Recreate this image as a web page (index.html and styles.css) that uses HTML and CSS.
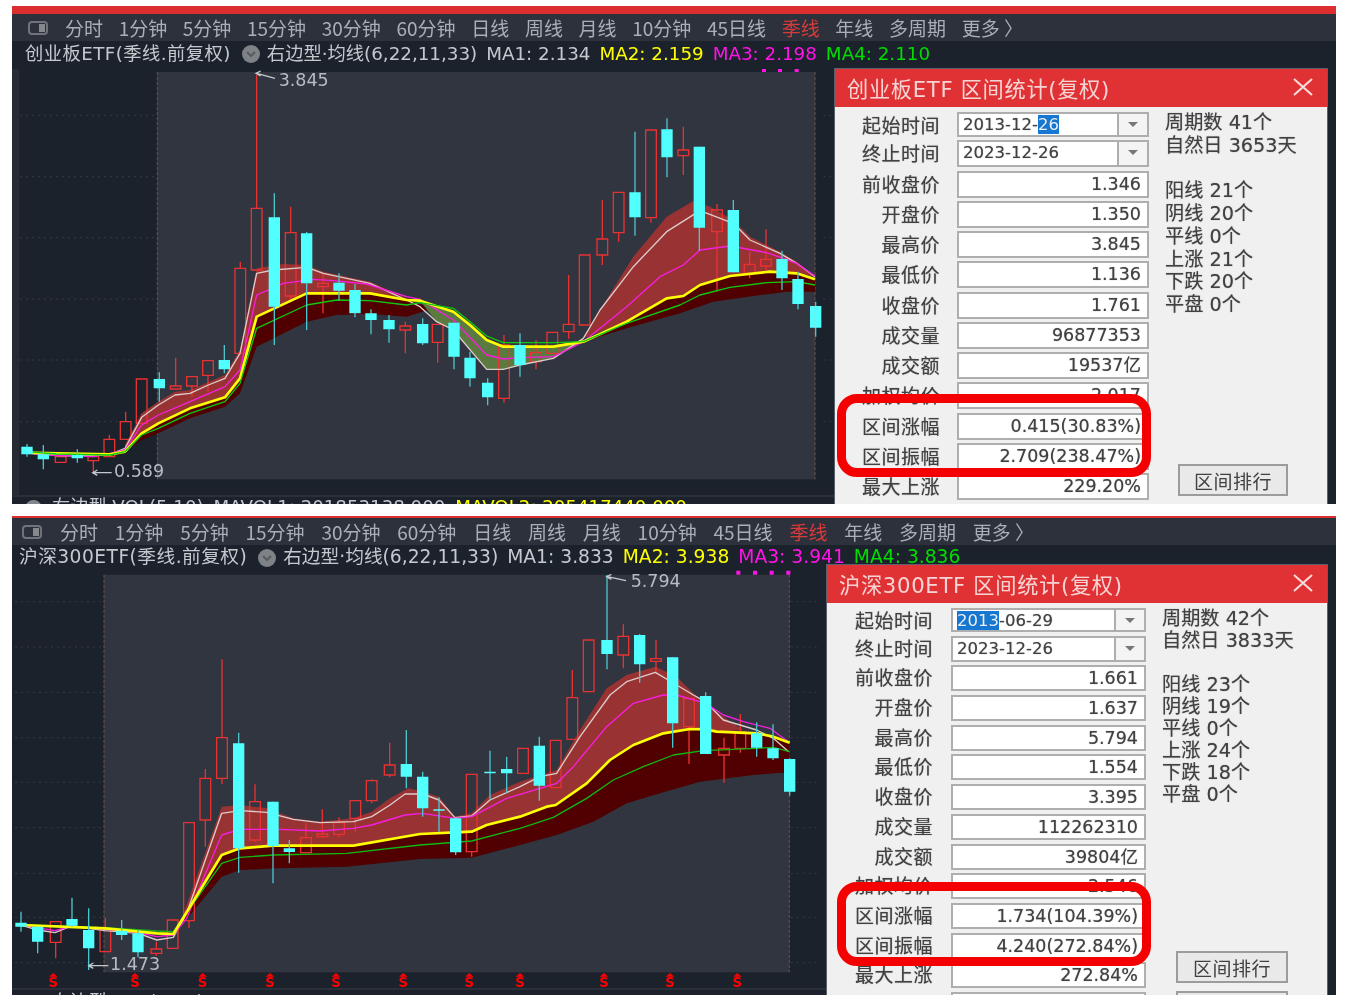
FILE: index.html

```html
<!DOCTYPE html>
<html lang="zh-CN">
<head>
  <meta charset="UTF-8">
  <title>区间统计</title>
  <link rel="stylesheet" href="styles.css">
</head>
<body>

  <section class="shot shot-top">
    <div class="top-line"></div>
    <div class="toolbar">
      <svg class="layout-icon" viewBox="0 0 20 14"><rect x="1" y="1" width="18" height="12" rx="3"/><rect class="layout-icon-bar" x="11" y="3" width="6" height="8"/></svg>
      <span>分时</span><span>1分钟</span><span>5分钟</span><span>15分钟</span><span>30分钟</span><span>60分钟</span><span>日线</span><span>周线</span><span>月线</span><span>10分钟</span><span>45日线</span><span class="active">季线</span><span>年线</span><span>多周期</span><span>更多 〉</span>
    </div>
    <div class="legend">
      <span class="legend-name">创业板ETF(季线.前复权)</span>
      <svg class="legend-icon" viewBox="0 0 18 18"><circle cx="9" cy="9" r="9"/><path d="M5 7l4 4 4-4"/></svg>
      <span>右边型·均线(6,22,11,33)</span>
      <span>MA1: 2.134</span><span class="ma2">MA2: 2.159</span><span class="ma3">MA3: 2.198</span><span class="ma4">MA4: 2.110</span>
    </div>
    <div class="main">
      <div class="chart">
        <svg class="kline" viewBox="36 27 2469 1278">
          <rect class="side-strip" x="36" y="27" width="22" height="1278"/>
          <path class="grid" d="M60 166H465M60 350H465M60 533H465M60 717H465M60 900H465M60 1085H465M2470 166H2505M2470 350H2505M2470 533H2505M2470 717H2505M2470 900H2505M2470 1085H2505"/>
          <rect class="plot" x="472" y="36" width="1973" height="1222"/>
          <path class="plot-edge" d="M472 36V1258M2445 36V1258"/>
          <path class="dots" d="M2286 24h12v12h-12zM2334 24h12v12h-12zM2384 24h12v12h-12z"/>

          <polygon class="fill-maroon" points="375,1175 425,1120 475,1090 570,1045 675,1012 720,955 770,770 920,700 1110,700 1220,720 1300,745 1220,770 1110,762 1010,765 920,785 770,860 720,1000 675,1040 570,1075 475,1120 425,1140"/>
          <polygon class="fill-maroon" points="1750,845 1880,785 2000,715 2050,708 2100,675 2190,648 2310,635 2390,640 2445,658 2445,695 2360,695 2260,708 2140,725 2040,760 1880,805"/>
          <polygon class="fill-brown" points="375,1155 425,1060 475,1025 525,995 570,990 675,945 720,870 770,625 850,612 920,615 970,635 1110,665 1220,715 1260,722 1220,720 1110,700 920,700 770,770 720,955 675,1012 570,1045 475,1090 425,1120 375,1175"/>
          <polygon class="fill-brown" points="1750,835 1800,750 1900,590 2000,470 2080,423 2130,440 2200,480 2250,530 2340,575 2390,605 2445,650 2390,640 2310,635 2190,648 2100,675 2050,708 2000,715 1880,785"/>
          <polygon class="fill-olive" points="1260,722 1360,755 1410,795 1460,840 1510,860 1660,860 1750,845 1660,895 1560,915 1510,928 1460,928 1360,810 1310,785"/>

          <path class="wick-red" d="M280 1202V1237M328 1125V1138M377 1055V1085M527 893V978M576 978V1010M624 946V995M721 605V625M770 45V445M872 440V518M872 708V720M969 640V670M969 680V760M1216 785V798M1216 810V880M1313 847V908M1512 825V855M1512 1015V1028M1608 840V878M1608 905V928M1706 645V793M1706 815V836M1807 420V537M1807 585V615M1856 518V545M1953 473V488M2050 200V270M2050 287V345M2151 432V450M2151 515V695M2249 575V613M2249 640V655M2298 508V598M2298 618V630"/>
          <path class="body-red" d="M166 1190h32v17h-32zM264 1190h32v12h-32zM312 1138h32v52h-32zM361 1085h32v53h-32zM409 957h32v133h-32zM511 978h32v9h-32zM560 950h32v28h-32zM608 902h32v44h-32zM705 625h32v255h-32zM754 445h32v185h-32zM856 518h32v190h-32zM953 670h32v10h-32zM1200 798h32v12h-32zM1297 793h32v54h-32zM1496 855h32v160h-32zM1592 878h32v27h-32zM1641 817h32v63h-32zM1690 793h32v22h-32zM1738 585h32v210h-32zM1791 537h32v48h-32zM1840 397h32v121h-32zM1937 210h32v263h-32zM2034 270h32v17h-32zM2135 450h32v65h-32zM2233 613h32v27h-32zM2282 598h32v20h-32z"/>

          <polyline class="ma-white" points="80,1178 130,1185 230,1188 330,1183 375,1165 425,1072 475,1035 525,1005 570,1000 625,975 675,955 720,880 770,640 820,630 920,622 970,640 1110,670 1220,720 1260,740 1310,785 1360,810 1460,928 1510,928 1560,915 1660,895 1750,835 1800,750 1900,620 2000,515 2100,452 2200,490 2250,540 2340,580 2390,610 2445,650"/>
          <polyline class="ma-magenta" points="80,1178 130,1185 280,1190 330,1180 375,1170 425,1095 475,1065 570,1025 675,980 720,930 770,705 850,670 940,658 1000,662 1100,672 1220,710 1260,718 1360,780 1460,885 1510,897 1560,893 1660,890 1750,845 1880,740 1980,650 2050,615 2100,570 2190,558 2300,578 2350,595 2390,610 2445,648"/>
          <polyline class="ma-yellow" points="80,1178 170,1180 330,1183 375,1175 425,1120 475,1090 570,1045 675,1012 720,955 770,770 920,700 1110,700 1220,720 1260,722 1360,755 1410,795 1460,840 1510,860 1660,860 1750,845 1880,785 2000,715 2050,708 2100,675 2190,648 2310,635 2390,640 2445,658"/>
          <polyline class="ma-green" points="80,1175 170,1182 330,1185 375,1175 425,1125 475,1105 570,1060 675,1025 720,970 770,805 920,735 1010,720 1110,722 1220,735 1260,728 1360,745 1410,785 1460,828 1510,848 1660,848 1750,845 1880,790 2040,735 2100,705 2190,682 2300,668 2390,665 2445,675"/>

          <path class="wick-cyan" d="M81 1152V1190M130 1155V1228M232 1168V1208M478 937V1025M673 855V940M823 400V855M920 516V810M1017 640V720M1065 672V772M1113 748V823M1167 765V848M1268 775V855M1362 788V928M1410 875V980M1463 955V1036M1560 820V950M1905 215V527M2001 175V352M2098 260V572M2200 420V637M2346 572V690M2394 635V748M2447 725V830"/>
          <path class="body-cyan" d="M64 1160h34v23h-34zM113 1183h34v15h-34zM215 1185h34v10h-34zM461 957h34v28h-34zM656 900h34v28h-34zM806 472h34v268h-34zM903 520h34v150h-34zM1000 668h34v24h-34zM1048 690h34v70h-34zM1096 760h34v20h-34zM1150 780h34v28h-34zM1251 792h34v58h-34zM1345 788h34v102h-34zM1393 893h34v62h-34zM1446 968h34v44h-34zM1543 855h34v60h-34zM1888 397h34v75h-34zM1984 208h34v84h-34zM2081 260h34v243h-34zM2183 450h34v187h-34zM2329 597h34v58h-34zM2377 657h34v75h-34zM2430 738h34v65h-34z"/>
          <path class="seam" d="M2445 738V803"/>

          <path class="pointer" d="M825 55L770 40M782 33L768 40L782 48M335 1238H280M292 1230L278 1238L292 1246"/>
          <text class="price" x="836" y="78">3.845</text>
          <text class="price" x="342" y="1252">0.589</text>
        </svg>
        <div class="vol-line">
          <span class="vol-dot"></span><span>右边型 VOL(5,10)</span><span>MAVOL1: 201853138.000</span><span class="ma2">MAVOL2: 205417440.000</span>
        </div>
      </div>

      <div class="dialog">
        <div class="dialog-title">
          <span>创业板ETF 区间统计(复权)</span>
          <svg class="close" viewBox="0 0 20 18"><path d="M1 1L19 17M19 1L1 17"/></svg>
        </div>
        <div class="dialog-body">
          <div class="form">
            <div class="row"><span class="label">起始时间</span><div class="field field-date"><span class="date-text">2013-12-<mark>26</mark></span><span class="drop"></span></div></div>
            <div class="row"><span class="label">终止时间</span><div class="field field-date"><span class="date-text">2023-12-26</span><span class="drop"></span></div></div>
            <div class="row"><span class="label">前收盘价</span><div class="field">1.346</div></div>
            <div class="row"><span class="label">开盘价</span><div class="field">1.350</div></div>
            <div class="row"><span class="label">最高价</span><div class="field">3.845</div></div>
            <div class="row"><span class="label">最低价</span><div class="field">1.136</div></div>
            <div class="row"><span class="label">收盘价</span><div class="field">1.761</div></div>
            <div class="row"><span class="label">成交量</span><div class="field">96877353</div></div>
            <div class="row"><span class="label">成交额</span><div class="field">19537亿</div></div>
            <div class="row"><span class="label">加权均价</span><div class="field">2.017</div></div>
            <div class="row"><span class="label">区间涨幅</span><div class="field">0.415(30.83%)</div></div>
            <div class="row"><span class="label">区间振幅</span><div class="field">2.709(238.47%)</div></div>
            <div class="row"><span class="label">最大上涨</span><div class="field">229.20%</div></div>
          </div>
          <div class="side">
            <div>周期数 41个</div>
            <div>自然日 3653天</div>
            <div class="side-group">阳线 21个</div>
            <div>阴线 20个</div>
            <div>平线 0个</div>
            <div>上涨 21个</div>
            <div>下跌 20个</div>
            <div>平盘 0个</div>
            <button class="rank-btn">区间排行</button>
          </div>
        </div>
        <div class="mark-box"></div>
      </div>
    </div>
  </section>

  <section class="shot shot-bottom">
    <div class="top-line"></div>
    <div class="toolbar">
      <svg class="layout-icon" viewBox="0 0 20 14"><rect x="1" y="1" width="18" height="12" rx="3"/><rect class="layout-icon-bar" x="11" y="3" width="6" height="8"/></svg>
      <span>分时</span><span>1分钟</span><span>5分钟</span><span>15分钟</span><span>30分钟</span><span>60分钟</span><span>日线</span><span>周线</span><span>月线</span><span>10分钟</span><span>45日线</span><span class="active">季线</span><span>年线</span><span>多周期</span><span>更多 〉</span>
    </div>
    <div class="legend">
      <span class="legend-name">沪深300ETF(季线.前复权)</span>
      <svg class="legend-icon" viewBox="0 0 18 18"><circle cx="9" cy="9" r="9"/><path d="M5 7l4 4 4-4"/></svg>
      <span>右边型·均线(6,22,11,33)</span>
      <span>MA1: 3.833</span><span class="ma2">MA2: 3.938</span><span class="ma3">MA3: 3.941</span><span class="ma4">MA4: 3.836</span>
    </div>
    <div class="main">
      <div class="chart">
        <svg class="kline" viewBox="36 15 2445 1269">
          <path class="grid" d="M45 125H305M45 261H305M45 397H305M45 533H305M45 667H305M45 803H305M45 940H305M45 1072H305M45 1208H305M2372 125H2460M2372 261H2460M2372 397H2460M2372 533H2460M2372 667H2460M2372 803H2460M2372 940H2460M2372 1072H2460M2372 1208H2460"/>
          <rect class="plot" x="312" y="44" width="2056" height="1193"/>
          <path class="plot-edge" d="M312 44V1237M2368 44V1237"/>
          <path class="dots" d="M2209 32h12v12h-12zM2259 32h12v12h-12zM2309 32h12v12h-12zM2359 32h12v12h-12z"/>

          <polygon class="fill-maroon" points="520,1122 665,885 720,865 820,857 1060,857 1260,822 1415,815 1460,795 1560,770 1640,740 1667,735 1760,670 1830,600 1900,555 1990,520 2070,507 2117,508 2150,515 2270,520 2320,530 2369,548 2369,640 2340,638 2260,645 2100,665 1980,700 1880,730 1780,785 1670,825 1560,855 1415,893 1260,897 1040,920 830,925 720,930 665,950 520,1125"/>
          <polygon class="fill-brown" points="540,1090 665,740 720,735 800,745 880,775 960,785 1060,775 1115,755 1170,715 1225,685 1268,695 1317,710 1365,770 1415,760 1470,705 1560,665 1670,630 1740,510 1820,385 1880,345 1966,320 2030,350 2080,400 2170,470 2230,510 2150,515 2117,508 2070,507 1990,520 1900,555 1830,600 1760,670 1667,735 1640,740 1560,770 1460,795 1415,815 1260,822 1060,857 820,857 720,865 665,885"/>

          <path class="wick-red" d="M167 1147V1195M316 1073V1105M469 1145V1167M469 1180V1187M567 1082V1105M616 627V655M616 780V860M666 298V533M666 655V672M765 673V725M765 840V845M918 790V833M967 748V822M967 830V835M1017 772V788M1017 823V832M1066 775V815M1115 658V662M1115 722V730M1169 548V615M1169 645V652M1415 875V890M1717 330V413M1870 193V229M1870 285V325M1968 240V296M1968 304V335M2067 500V612M2172 533V565M2172 585V668M2221 462V515M2221 565V578"/>
          <path class="body-red" d="M151 1085h32v62h-32zM300 1105h32v70h-32zM453 1167h32v13h-32zM502 1080h32v85h-32zM551 788h32v294h-32zM600 655h32v125h-32zM650 533h32v122h-32zM749 725h32v115h-32zM902 833h32v45h-32zM951 822h32v8h-32zM1001 788h32v35h-32zM1050 722h32v53h-32zM1099 662h32v60h-32zM1153 615h32v30h-32zM1399 643h32v232h-32zM1553 565h32v75h-32zM1651 541h32v142h-32zM1701 413h32v125h-32zM1750 240h32v155h-32zM1854 229h32v56h-32zM1952 296h32v8h-32zM2051 415h32v85h-32zM2156 565h32v20h-32zM2205 515h32v50h-32z"/>

          <polyline class="ma-white" points="63,1095 113,1110 165,1118 215,1098 315,1112 415,1120 470,1140 520,1132 560,1060 665,760 720,752 800,757 880,778 960,788 1060,785 1115,770 1170,735 1215,702 1268,702 1317,720 1365,773 1415,768 1470,720 1560,680 1620,650 1670,640 1740,530 1830,405 1880,365 1966,337 2030,375 2080,405 2117,425 2170,480 2270,510 2320,535 2366,575"/>
          <polyline class="ma-magenta" points="63,1095 165,1112 215,1098 315,1108 415,1118 470,1130 520,1125 560,1075 665,825 720,808 840,808 960,813 1060,805 1115,795 1215,765 1268,760 1365,775 1415,770 1520,715 1670,670 1720,620 1820,500 1900,430 1990,405 2030,405 2117,430 2170,465 2230,485 2310,505 2369,548"/>
          <polyline class="ma-green" points="63,1095 315,1103 470,1113 520,1115 665,910 720,892 820,885 1040,880 1260,855 1415,843 1560,805 1660,772 1760,715 1840,660 1930,620 2020,585 2110,572 2270,565 2320,562 2369,575"/>
          <polyline class="ma-yellow" points="63,1095 315,1105 470,1120 520,1122 665,885 720,865 820,857 1060,857 1260,822 1415,815 1460,795 1560,770 1640,740 1667,735 1760,670 1830,600 1900,555 1990,520 2070,507 2117,508 2150,515 2270,520 2320,530 2369,548"/>

          <path class="wick-cyan" d="M63 1055V1115M113 1100V1180M216 1013V1100M266 1045V1230M365 1080V1140M414 1110V1192M716 518V938M819 725V970M868 840V910M1219 510V685M1268 635V770M1317 712V815M1367 775V885M1470 572V720M1520 590V700M1618 530V722M1821 45V328M1919 222V368M2018 292V563M2117 397V582M2270 487V590M2319 493V600M2369 595V707"/>
          <path class="body-cyan" d="M46 1088h34v12h-34zM96 1100h34v45h-34zM199 1077h34v20h-34zM249 1110h34v55h-34zM348 1112h34v13h-34zM397 1120h34v57h-34zM699 550h34v315h-34zM802 725h34v133h-34zM851 865h34v11h-34zM1202 612h34v38h-34zM1251 650h34v95h-34zM1300 748h34v4h-34zM1350 775h34v102h-34zM1453 635h34v5h-34zM1503 627h34v13h-34zM1601 557h34v120h-34zM1804 240h34v42h-34zM1902 225h34v88h-34zM2001 292h34v198h-34zM2100 408h34v174h-34zM2253 520h34v43h-34zM2302 565h34v30h-34zM2352 597h34v98h-34z"/>
          <path class="seam" d="M2368 597V695"/>

          <path class="pointer" d="M1878 62L1822 50M1834 43L1820 50L1834 58M325 1217H268M280 1209L266 1217L280 1225"/>
          <text class="price" x="1892" y="82">5.794</text>
          <text class="price" x="330" y="1231">1.473</text>

          <path class="s-arrow" d="M160 1239l13 11h-26zM405 1239l13 11h-26zM608 1239l13 11h-26zM810 1239l13 11h-26zM1008 1239l13 11h-26zM1210 1239l13 11h-26zM1408 1239l13 11h-26zM1560 1239l13 11h-26zM1812 1239l13 11h-26zM2010 1239l13 11h-26zM2212 1239l13 11h-26z"/>
          <text class="s-mark" x="160 405 608 810 1008 1210 1408 1560 1812 2010 2212" y="1282">SSSSSSSSSSS</text>
        </svg>
        <div class="vol-line">
          <span class="vol-dot"></span><span>右边型 VOL(5,10)</span><span>MAVOL1: 112382492.000</span><span class="ma2">MAVOL2: 108884370.000</span>
        </div>
      </div>

      <div class="dialog">
        <div class="dialog-title">
          <span>沪深300ETF 区间统计(复权)</span>
          <svg class="close" viewBox="0 0 20 18"><path d="M1 1L19 17M19 1L1 17"/></svg>
        </div>
        <div class="dialog-body">
          <div class="form">
            <div class="row"><span class="label">起始时间</span><div class="field field-date"><span class="date-text"><mark>2013</mark>-06-29</span><span class="drop"></span></div></div>
            <div class="row"><span class="label">终止时间</span><div class="field field-date"><span class="date-text">2023-12-26</span><span class="drop"></span></div></div>
            <div class="row"><span class="label">前收盘价</span><div class="field">1.661</div></div>
            <div class="row"><span class="label">开盘价</span><div class="field">1.637</div></div>
            <div class="row"><span class="label">最高价</span><div class="field">5.794</div></div>
            <div class="row"><span class="label">最低价</span><div class="field">1.554</div></div>
            <div class="row"><span class="label">收盘价</span><div class="field">3.395</div></div>
            <div class="row"><span class="label">成交量</span><div class="field">112262310</div></div>
            <div class="row"><span class="label">成交额</span><div class="field">39804亿</div></div>
            <div class="row"><span class="label">加权均价</span><div class="field">2.546</div></div>
            <div class="row"><span class="label">区间涨幅</span><div class="field">1.734(104.39%)</div></div>
            <div class="row"><span class="label">区间振幅</span><div class="field">4.240(272.84%)</div></div>
            <div class="row"><span class="label">最大上涨</span><div class="field">272.84%</div></div>
            <div class="row"><span class="label"></span><div class="field"></div></div>
          </div>
          <div class="side">
            <div>周期数 42个</div>
            <div>自然日 3833天</div>
            <div class="side-group">阳线 23个</div>
            <div>阴线 19个</div>
            <div>平线 0个</div>
            <div>上涨 24个</div>
            <div>下跌 18个</div>
            <div>平盘 0个</div>
            <button class="rank-btn">区间排行</button>
            <button class="rank-btn rank-btn-next"></button>
          </div>
        </div>
        <div class="mark-box"></div>
      </div>
    </div>
  </section>

</body>
</html>
```

FILE: styles.css

```css
body {
  margin: 0;
  padding: 6px 11px 0 12px;
  background: #fff;
  font-family: "DejaVu Sans", "Noto Sans CJK SC", sans-serif;
}

.shot {
  overflow: hidden;
  background: #1c222c;
  color: #c4c9ce;
  filter: blur(0.55px);
}
.shot-top {
  height: 498px;
  margin-bottom: 12px;
  --toolbar-pad: 16px;
  --toolbar-gap: 15.65px;
  --icon-gap: 17px;
  --legend-pad: 13px;
  --legend-h: 28px;
  --legend-line: 26px;
  --legend-font: 18.3px;
  --vol-pad: 1px;
  --label-w: 105px;
  --label-gap: 17px;
  --label-line: 26px;
  --field-w: 192px;
  --dialog-w: 492px;
  --row-h: 27px;
  --row-gap: 3.25px;
  --side-line: 22.7px;
  --side-group: 23px;
  --btn-top: 147px;
  --btn-w: 110px;
  --btn-left: 13px;
}
.shot-bottom {
  height: 479px;
  --toolbar-pad: 10px;
  --toolbar-gap: 16.8px;
  --icon-gap: 18px;
  --legend-pad: 7px;
  --legend-h: 20px;
  --legend-line: 24px;
  --legend-font: 18.7px;
  --vol-pad: 3px;
  --label-w: 106px;
  --label-gap: 18px;
  --label-line: 24px;
  --field-w: 195px;
  --dialog-w: 500px;
  --row-h: 26px;
  --row-gap: 3.7px;
  --side-line: 22px;
  --side-group: 22px;
  --btn-top: 145px;
  --btn-w: 112px;
  --btn-left: 14px;
}

.top-line {
  height: 8px;
  background: #dc2e2e;
}
.shot-bottom .top-line {
  height: 2px;
}

.toolbar {
  display: flex;
  align-items: center;
  gap: var(--toolbar-gap);
  height: 27px;
  padding-left: var(--toolbar-pad);
  background: #2d313b;
  color: #a9afb6;
  font-family: "Noto Sans CJK SC", sans-serif;
  font-size: 19px;
  white-space: nowrap;
}
.toolbar .active {
  color: #d93a3a;
}
.layout-icon {
  width: 20px;
  height: 14px;
  margin-right: calc(var(--icon-gap) - var(--toolbar-gap));
  fill: none;
  stroke: #70747a;
  stroke-width: 2;
}
.layout-icon .layout-icon-bar {
  fill: #85898e;
  stroke: none;
}

.legend {
  display: flex;
  align-items: flex-start;
  gap: 9px;
  height: var(--legend-h);
  padding-left: var(--legend-pad);
  font-size: var(--legend-font);
  line-height: var(--legend-line);
  white-space: nowrap;
}
.legend-name {
  letter-spacing: 0.45px;
}
.legend-icon {
  flex: none;
  width: 18px;
  height: 18px;
  margin: 4px -2px 0 2px;
}
.legend-icon circle {
  fill: #7f8287;
}
.legend-icon path {
  fill: none;
  stroke: #585b60;
  stroke-width: 2;
}
.ma2 { color: #ffff00; }
.ma3 { color: #ff14e8; }
.ma4 { color: #00dc00; }

.main {
  display: flex;
  padding-right: 9px;
}
.chart {
  flex: 1;
  min-width: 0;
}
.kline {
  display: block;
  width: 100%;
}
.side-strip { fill: #272b34; }
.plot { fill: #31353f; }
.grid {
  fill: none;
  stroke: #343942;
  stroke-width: 3;
  stroke-dasharray: 6 12;
}
.plot-edge {
  fill: none;
  stroke: #6b5344;
  stroke-width: 3;
  stroke-dasharray: 10 5;
}
.dots { fill: #ff14e8; }
.fill-maroon { fill: #500000; }
.fill-brown { fill: #993333; }
.fill-olive { fill: #5a7a40; }
.wick-red, .body-red {
  fill: none;
  stroke: #e83232;
  stroke-width: 4;
}
.wick-cyan {
  fill: none;
  stroke: #4cc4cc;
  stroke-width: 4;
}
.body-cyan { fill: #52ffff; }
.seam {
  fill: none;
  stroke: #8fdcdc;
  stroke-width: 3;
  stroke-dasharray: 10 8;
}
.ma-white, .ma-magenta, .ma-green, .ma-yellow {
  fill: none;
  stroke-linejoin: round;
}
.ma-white { stroke: #dccccc; stroke-width: 4; }
.ma-magenta { stroke: #f81ee0; stroke-width: 4; }
.ma-green { stroke: #12b812; stroke-width: 4; }
.ma-yellow { stroke: #ffff00; stroke-width: 8; }
.shot-top .ma-green { stroke: #10c810; }
.pointer {
  fill: none;
  stroke: #c4c9ce;
  stroke-width: 4;
}
.price {
  fill: #b6bcc2;
  font-size: 52.5px;
}
.s-arrow { fill: #ff0000; }
.s-mark {
  fill: #ff0000;
  font-size: 40px;
  font-weight: 700;
  text-anchor: middle;
}

.vol-line {
  display: flex;
  gap: 10px;
  padding: var(--vol-pad) 0 0 13px;
  border-top: 2px solid #2b3038;
  font-size: 18.2px;
  line-height: 18px;
  white-space: nowrap;
}
.vol-dot {
  width: 17px;
  height: 17px;
  margin-top: 2px;
  border-radius: 50%;
  background: #84878b;
}

.dialog {
  flex: none;
  position: relative;
  width: var(--dialog-w);
  background: #f0f0f0;
  box-shadow: 0 0 0 1px #59616c;
  color: #414141;
}
.dialog-title {
  display: flex;
  align-items: center;
  justify-content: space-between;
  height: 36px;
  padding: 0 14px 2px 12px;
  background: #e03234;
  color: #f7d4d4;
  font-size: 21.2px;
  letter-spacing: 0.7px;
  white-space: nowrap;
}
.close {
  width: 20px;
  height: 18px;
  fill: none;
  stroke: #f9dede;
  stroke-width: 2;
}
.dialog-body {
  display: flex;
  gap: 16px;
  padding-top: 5px;
  text-shadow: 0 0 1px rgba(60, 60, 60, 0.6);
}
.form {
  display: flex;
  flex-direction: column;
  gap: var(--row-gap);
}
.row {
  display: flex;
  gap: var(--label-gap);
  height: var(--row-h);
}
.row:first-child {
  height: calc(var(--row-h) - 2px);
}
.label {
  width: var(--label-w);
  font-family: "Noto Sans CJK SC", sans-serif;
  font-size: 19px;
  line-height: var(--label-line);
  letter-spacing: 0.5px;
  text-align: right;
}
.field {
  box-sizing: border-box;
  width: var(--field-w);
  padding-right: 6px;
  border: 2px solid #aeaeae;
  background: #fff;
  font-size: 17.5px;
  line-height: 22px;
  text-align: right;
}
.field-date {
  display: flex;
  padding-right: 0;
  text-align: left;
}
.date-text {
  flex: 1;
  padding-left: 4px;
  font-size: 16.5px;
}
.date-text mark {
  background: #1478d4;
  color: #e6f2ff;
}
.drop {
  position: relative;
  width: 28px;
  border-left: 2px solid #aeaeae;
  background: #f4f4f4;
}
.drop::after {
  content: "";
  position: absolute;
  top: 8px;
  left: 9px;
  border-top: 5px solid #777;
  border-left: 5px solid transparent;
  border-right: 5px solid transparent;
}

.side {
  font-size: 19.2px;
  line-height: var(--side-line);
  white-space: nowrap;
}
.side-group {
  margin-top: var(--side-group);
}
.rank-btn {
  display: block;
  width: var(--btn-w);
  height: 32px;
  margin: var(--btn-top) 0 0 var(--btn-left);
  border: 2px solid #9c9c9c;
  background: #e9e9e9;
  color: #414141;
  font-family: "Noto Sans CJK SC", sans-serif;
  font-size: 19px;
  letter-spacing: 0.5px;
}
.rank-btn-next {
  margin-top: 8px;
}

.mark-box {
  position: absolute;
  left: 2px;
  top: 325px;
  box-sizing: border-box;
  width: 314px;
  height: 83px;
  border: 9px solid #f50000;
  border-radius: 20px;
}
.shot-bottom .mark-box {
  left: 10px;
  top: 317px;
  height: 84px;
}
```
